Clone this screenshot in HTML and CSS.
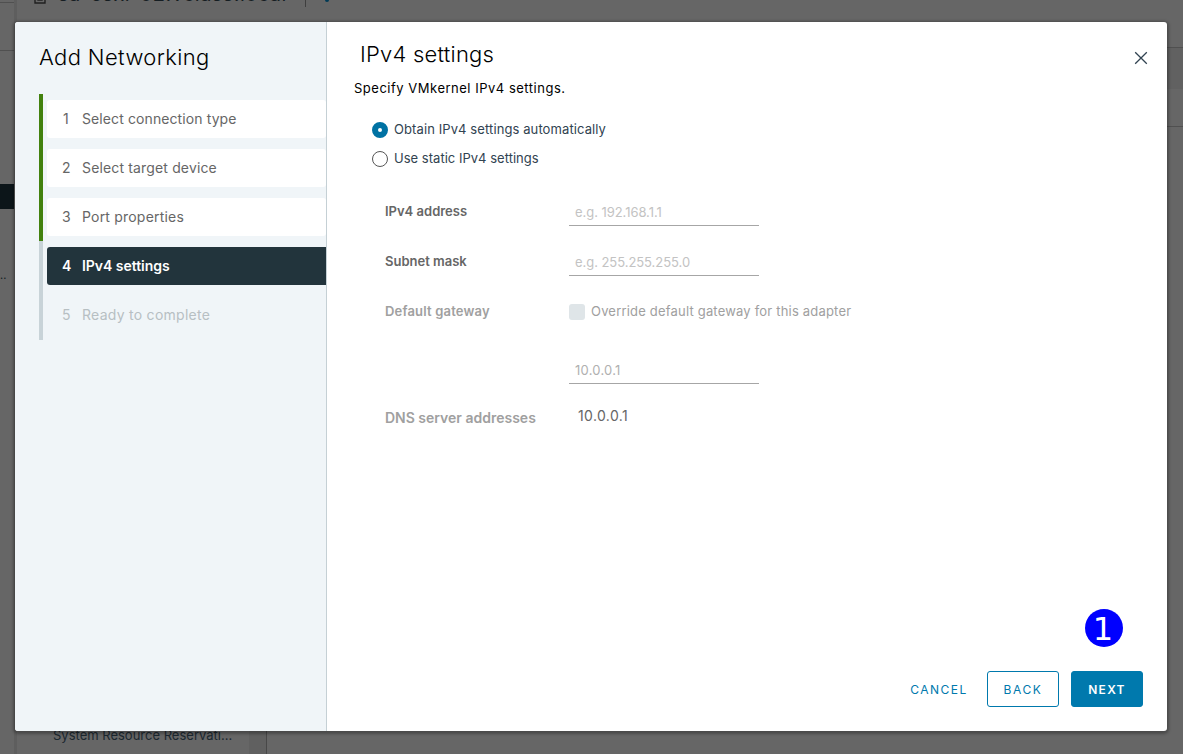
FILE: index.html
```html
<!DOCTYPE html>
<html lang="en">
<head>
<meta charset="utf-8">
<title>Add Networking</title>
<link rel="stylesheet" href="styles.css">
</head>
<body>
<div class="app">
  <div class="inventory">
    <div class="inv-head"></div>
    <div class="inv-tabs"></div>
    <div class="inv-tree"></div>
    <div class="inv-selected"></div>
    <div class="inv-item">..</div>
  </div>
  <div class="splitter"></div>
  <div class="workspace">
    <div class="object-header">
      <svg class="host-icon" viewBox="0 0 12 16"><path d="M1 0V15H11V0M4 12h4v-3H4z" fill="none" stroke="currentColor" stroke-width="1.4"/></svg>
      <span class="host-name">sa-esxi-02.vclass.local</span>
      <span class="divider"></span>
      <span class="action-dot"></span>
    </div>
    <div class="tabs"></div>
    <div class="toolbar"></div>
    <div class="config">
      <div class="config-nav">System Resource Reservati...</div>
      <div class="config-scroll"></div>
      <div class="config-body"></div>
    </div>
  </div>
</div>

<div class="modal">
  <aside class="side">
    <h1 class="side-title">Add Networking</h1>
    <ol class="steps">
      <li class="step done"><span class="pill"><span class="num one">1</span><span class="t-s1">Select connection type</span></span></li>
      <li class="step done"><span class="pill"><span class="num">2</span><span class="t-s2">Select target device</span></span></li>
      <li class="step done"><span class="pill"><span class="num">3</span><span class="t-s3">Port properties</span></span></li>
      <li class="step current"><span class="pill"><span class="num">4</span><span class="t-s4">IPv4 settings</span></span></li>
      <li class="step todo"><span class="pill"><span class="num">5</span><span class="t-s5">Ready to complete</span></span></li>
    </ol>
  </aside>
  <main class="content">
    <header class="head">
      <h2 class="title">IPv4 settings</h2>
      <svg class="close" viewBox="0 0 14 14"><path d="M1.2 1.2 12.8 12.8M12.8 1.2 1.2 12.8" stroke="#314351" stroke-width="1.3" fill="none"/></svg>
    </header>
    <p class="intro">Specify VMkernel IPv4 settings.</p>
    <div class="radios">
      <label class="radio"><i class="dot on"></i><span class="t-r1">Obtain IPv4 settings automatically</span></label>
      <label class="radio"><i class="dot"></i><span class="t-r2">Use static IPv4 settings</span></label>
    </div>
    <div class="form">
      <div class="row"><span class="label">IPv4 address</span><div class="field"><span class="t-f1">e.g. 192.168.1.1</span></div></div>
      <div class="row"><span class="label">Subnet mask</span><div class="field"><span class="t-f2">e.g. 255.255.255.0</span></div></div>
      <div class="row gateway"><span class="label dim t-l3">Default gateway</span><span class="check"><i class="box"></i><span class="t-c">Override default gateway for this adapter</span></span></div>
      <div class="row gateway-ip"><span class="label"></span><div class="field dark"><span class="t-f3">10.0.0.1</span></div></div>
      <div class="row dns"><span class="label dim big">DNS server addresses</span><span class="value">10.0.0.1</span></div>
    </div>
    <footer class="actions">
      <button class="btn link">CANCEL</button>
      <button class="btn outline">BACK</button>
      <button class="btn primary">NEXT</button>
    </footer>
  </main>
  <span class="callout">1</span>
</div>
</body>
</html>
```
FILE: styles.css
```css
* { box-sizing: border-box; }
body { margin: 0; width: 1183px; height: 754px; overflow: hidden; position: relative; background: #666; font-family: Inter, sans-serif; }
h1, h2, p, ol { margin: 0; padding: 0; font-weight: 400; }

.app { display: flex; height: 754px; color: #151d22; }
.inventory { width: 14px; overflow: hidden; }
.inv-head { height: 3px; border-bottom: 1px solid #505050; }
.inv-tabs { height: 48px; border-bottom: 1px solid #505050; }
.inv-tree { height: 133px; }
.inv-selected { height: 25px; background: #0c1519; }
.inv-item { margin-top: 57px; font-size: 11px; line-height: 18px; }
.splitter { width: 3px; background: #5e5e5e; }
.workspace { flex: 1; display: flex; flex-direction: column; }
.object-header { height: 48px; display: flex; align-items: flex-start; border-bottom: 1px solid #505050; }
.host-icon { width: 12px; height: 16px; margin: -12px 0 0 17px; color: #202020; }
.host-name { margin: -18px 0 0 12px; width: 231px; font-size: 20px; line-height: 24px; letter-spacing: .45px; white-space: nowrap; }
.divider { width: 1px; height: 7px; margin-left: 16px; background: #3f3f3f; }
.action-dot { width: 4px; height: 2px; margin-left: 19px; border-radius: 0 0 2px 2px; background: #003a56; }
.tabs { height: 41px; background: #616161; }
.toolbar { height: 38px; border-bottom: 1px solid #505050; }
.config { flex: 1; display: flex; align-items: stretch; }
.config-nav { width: 232px; padding: 598px 0 0 36px; font-size: 13px; line-height: 20px; white-space: nowrap; color: #1c2830; }
.config-scroll { width: 18px; background: #606060; border-right: 1px solid #484848; }
.config-body { flex: 1; }

.modal { position: absolute; left: 15px; top: 22px; width: 1152px; height: 709px; display: flex; background: #fff; border-radius: 3px; box-shadow: 0 1px 3px 2px rgba(0, 0, 0, .28); }
.side { width: 312px; padding: 20px 0 0 24px; background: #f0f5f8; border-right: 1px solid #c5d0d5; border-radius: 3px 0 0 3px; }
.side-title { height: 52px; font-size: 22px; line-height: 30px; font-weight: 300; letter-spacing: .37px; color: #000; }
.steps { list-style: none; }
.step { height: 49px; padding: 6px 0 5px 4px; border-left: 4px solid #c8d3d8; }
.step:last-child { height: 50px; }
.step.done { border-color: #42810e; }
.pill { display: flex; align-items: center; height: 38px; padding: 0 0 2px 15px; border-radius: 3px; font-size: 14px; color: #666; white-space: nowrap; }
.num { width: 20px; }
.num.one { padding-left: 1px; }
.done .pill { background: #fff; }
.current .pill { background: #22343c; color: #fff; font-weight: 600; border-radius: 3px 0 0 3px; }
.todo .pill { color: #b7bfc3; padding-bottom: 1px; }
.t-s1 { letter-spacing: .1px; }
.t-s2 { letter-spacing: .15px; }
.t-s3 { letter-spacing: .2px; }
.t-s4 { letter-spacing: -.03px; }
.t-s5 { letter-spacing: .27px; }

.content { flex: 1; display: flex; flex-direction: column; white-space: nowrap; }
.head { display: flex; justify-content: space-between; align-items: flex-start; height: 56px; padding: 17px 19px 0 33px; }
.title { font-size: 22px; line-height: 30px; font-weight: 300; letter-spacing: .22px; color: #000; }
.close { width: 14px; height: 14px; margin-top: 12px; }
.intro { height: 44px; padding-left: 27px; font-size: 13px; line-height: 20px; letter-spacing: .51px; color: #000; }
.radios { display: grid; gap: 13px; padding: 0 0 0 45px; }
.radio { display: flex; align-items: center; gap: 6px; height: 16px; font-size: 13px; line-height: 14px; color: #314351; }
.radio span { padding-bottom: 2px; }
.t-r1 { letter-spacing: .1px; }
.t-r2 { letter-spacing: .02px; }
.dot { width: 16px; height: 16px; border: 1px solid #565656; border-radius: 50%; }
.dot.on { border: 6px solid #0072a3; background: #fff; }
.form { flex: 1; padding: 34px 0 0 58px; color: #666; font-size: 13px; }
.row { display: flex; align-items: flex-start; height: 50px; }
.label { width: 184px; line-height: 20px; font-weight: 600; }
.label.dim { color: #a0a0a0; }
.label.big { font-size: 14px; padding-top: 2px; }
.t-l3 { letter-spacing: .18px; }
.field { width: 190px; height: 25px; padding: 1px 6px 0; line-height: 20px; color: #c3c3c3; border-bottom: 1px solid #a6a6a6; }
.field.dark { color: #b0b0b0; }
.t-f1, .t-f2 { letter-spacing: -.05px; }
.t-f3 { letter-spacing: .25px; }
.check { display: flex; align-items: center; gap: 6px; height: 20px; color: #a0a0a0; }
.box { width: 16px; height: 16px; margin-top: 2px; border-radius: 3px; background: #dfe5e8; }
.t-c { letter-spacing: .19px; }
.row.gateway { height: 58px; }
.row.gateway-ip { height: 47px; }
.value { padding-left: 9px; font-size: 14px; line-height: 20px; letter-spacing: .38px; }
.actions { display: flex; justify-content: flex-end; height: 60px; padding-right: 24px; gap: 12px; }
.btn { height: 36px; width: 72px; padding: 2px 0 0; border: 1px solid #0079ad; border-radius: 3px; background: #fff; color: #0079ad; font: 400 12px/32px Inter, sans-serif; letter-spacing: 1.6px; }
.btn.link { width: 73px; padding-left: 1px; border-color: transparent; letter-spacing: 1.5px; }
.btn.primary { background: #0079ad; color: #fff; font-weight: 600; letter-spacing: 1.3px; }
.callout { position: absolute; left: 1070px; top: 587px; width: 38px; height: 38px; padding-right: 2px; border-radius: 50%; background: #00f; color: #fff; font: 32px/40px "DejaVu Sans", sans-serif; text-align: center; }
```
